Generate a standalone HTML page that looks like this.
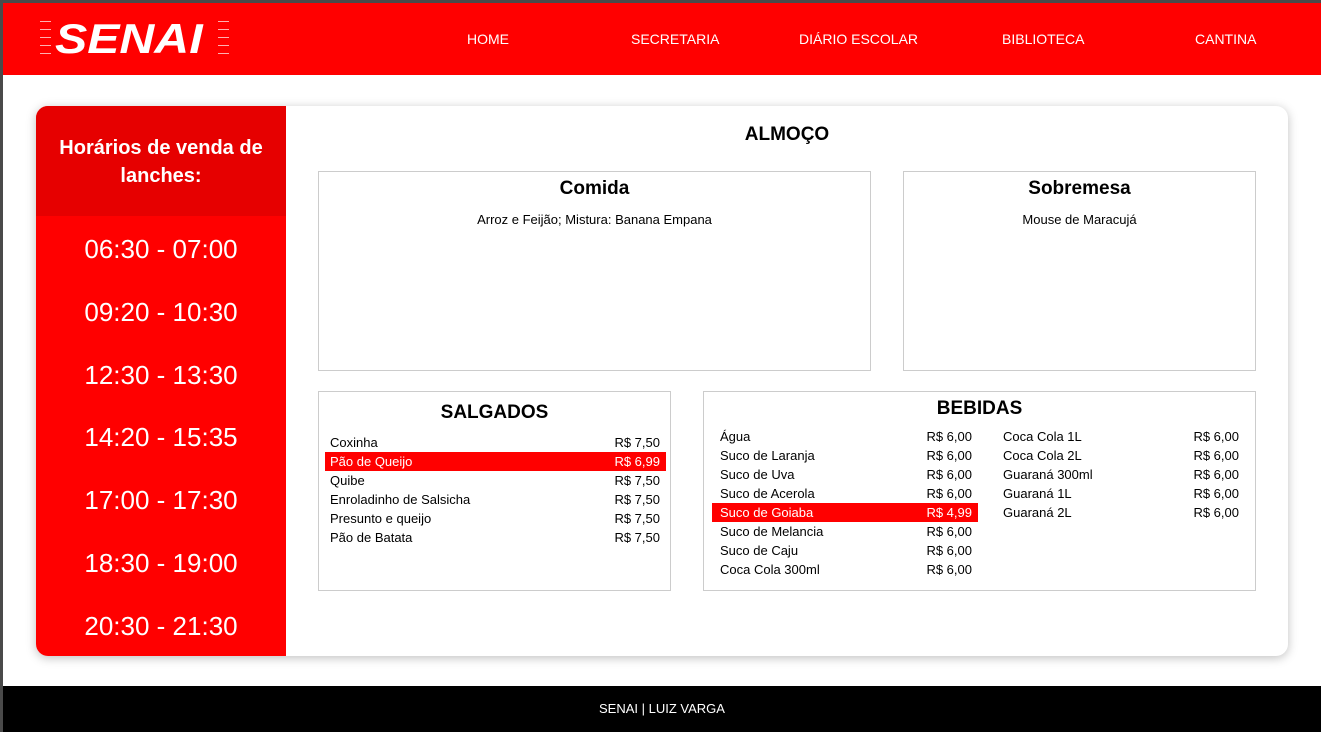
<!DOCTYPE html>
<html><head><meta charset="utf-8"><style>
*{margin:0;padding:0;box-sizing:border-box}
body{width:1321px;height:732px;background:#fff;font-family:"Liberation Sans",sans-serif;position:relative;overflow:hidden}
.abs{position:absolute}
.bl{position:absolute;left:0;top:0;width:3px;height:732px;background:#4a4a4a}
.bt{position:absolute;left:0;top:0;width:1321px;height:3px;background:#4a4a4a}
header{position:absolute;left:3px;top:3px;width:1318px;height:72px;background:#ff0000}
.nav{position:absolute;top:28px;color:#fff;font-size:14px}
.logo{position:absolute;left:52px;top:12px;color:#fff;font-weight:bold;font-style:italic;font-size:42px;letter-spacing:0px;transform:scaleX(1.15);transform-origin:left}
.lines{position:absolute;width:11px;height:34px;top:18px;background:repeating-linear-gradient(#ffb0b0 0 1px,transparent 1px 8px)}
.card{position:absolute;left:36px;top:106px;width:1252px;height:550px;border-radius:12px;background:#fff;box-shadow:0 2px 10px rgba(0,0,0,.25);overflow:hidden}
.side{position:absolute;left:0;top:0;width:250px;height:550px;background:#ff0000;color:#fff;text-align:center}
.side .h{height:110px;background:#e60000;font-weight:bold;font-size:20px;line-height:28px;padding-top:28px}
.time{position:absolute;left:0;width:250px;font-size:26px}
.box{position:absolute;border:1px solid #ccc;background:#fff}
.t{font-weight:bold;text-align:center;font-size:19px}
.row{position:absolute;font-size:13px;height:19px;line-height:19px}
.row span{position:absolute;right:6px}
.hl{background:#ff0000;color:#fff}
footer{position:absolute;left:3px;top:686px;width:1318px;height:46px;background:#000;color:#fff;font-size:13px;text-align:center;line-height:46px}
</style></head><body>
<div class="bl"></div><div class="bt"></div>
<header>
<div class="lines" style="left:37px"></div>
<div class="logo">SENAI</div>
<div class="lines" style="left:215px"></div>
<div class="nav" style="left:464px">HOME</div>
<div class="nav" style="left:628px">SECRETARIA</div>
<div class="nav" style="left:796px">DIÁRIO ESCOLAR</div>
<div class="nav" style="left:999px">BIBLIOTECA</div>
<div class="nav" style="left:1192px">CANTINA</div>
</header>
<div class="card">
<div class="side"><div class="h">Horários de venda de<br>lanches:</div>
<div class="time" style="top:128px">06:30 - 07:00</div>
<div class="time" style="top:191px">09:20 - 10:30</div>
<div class="time" style="top:254px">12:30 - 13:30</div>
<div class="time" style="top:316px">14:20 - 15:35</div>
<div class="time" style="top:379px">17:00 - 17:30</div>
<div class="time" style="top:442px">18:30 - 19:00</div>
<div class="time" style="top:505px">20:30 - 21:30</div>
</div>
<div class="abs t" style="left:250px;width:1002px;top:18px">ALMOÇO</div>
<div class="box" style="left:282px;top:65px;width:553px;height:200px">
<div class="t" style="margin-top:6px">Comida</div>
<div style="text-align:center;font-size:13px;margin-top:12px">Arroz e Feijão; Mistura: Banana Empana</div></div>
<div class="box" style="left:867px;top:65px;width:353px;height:200px">
<div class="t" style="margin-top:6px">Sobremesa</div>
<div style="text-align:center;font-size:13px;margin-top:12px">Mouse de Maracujá</div></div>
<div class="box" style="left:282px;top:285px;width:353px;height:200px">
<div class="t" style="margin-top:10px">SALGADOS</div>
<div class="row" style="left:6px;width:341px;top:41px;padding-left:5px">Coxinha<span>R$ 7,50</span></div>
<div class="row hl" style="left:6px;width:341px;top:60px;padding-left:5px">Pão de Queijo<span>R$ 6,99</span></div>
<div class="row" style="left:6px;width:341px;top:79px;padding-left:5px">Quibe<span>R$ 7,50</span></div>
<div class="row" style="left:6px;width:341px;top:98px;padding-left:5px">Enroladinho de Salsicha<span>R$ 7,50</span></div>
<div class="row" style="left:6px;width:341px;top:117px;padding-left:5px">Presunto e queijo<span>R$ 7,50</span></div>
<div class="row" style="left:6px;width:341px;top:136px;padding-left:5px">Pão de Batata<span>R$ 7,50</span></div>
</div>
<div class="box" style="left:667px;top:285px;width:553px;height:200px">
<div class="t" style="margin-top:6px">BEBIDAS</div>
<div class="row" style="left:8px;width:266px;top:35px;padding-left:8px">Água<span>R$ 6,00</span></div>
<div class="row" style="left:8px;width:266px;top:54px;padding-left:8px">Suco de Laranja<span>R$ 6,00</span></div>
<div class="row" style="left:8px;width:266px;top:73px;padding-left:8px">Suco de Uva<span>R$ 6,00</span></div>
<div class="row" style="left:8px;width:266px;top:92px;padding-left:8px">Suco de Acerola<span>R$ 6,00</span></div>
<div class="row hl" style="left:8px;width:266px;top:111px;padding-left:8px">Suco de Goiaba<span>R$ 4,99</span></div>
<div class="row" style="left:8px;width:266px;top:130px;padding-left:8px">Suco de Melancia<span>R$ 6,00</span></div>
<div class="row" style="left:8px;width:266px;top:149px;padding-left:8px">Suco de Caju<span>R$ 6,00</span></div>
<div class="row" style="left:8px;width:266px;top:168px;padding-left:8px">Coca Cola 300ml<span>R$ 6,00</span></div>
<div class="row" style="left:291px;width:250px;top:35px;padding-left:8px">Coca Cola 1L<span>R$ 6,00</span></div>
<div class="row" style="left:291px;width:250px;top:54px;padding-left:8px">Coca Cola 2L<span>R$ 6,00</span></div>
<div class="row" style="left:291px;width:250px;top:73px;padding-left:8px">Guaraná 300ml<span>R$ 6,00</span></div>
<div class="row" style="left:291px;width:250px;top:92px;padding-left:8px">Guaraná 1L<span>R$ 6,00</span></div>
<div class="row" style="left:291px;width:250px;top:111px;padding-left:8px">Guaraná 2L<span>R$ 6,00</span></div>
</div>
</div>
<footer>SENAI | LUIZ VARGA</footer>
</body></html>
